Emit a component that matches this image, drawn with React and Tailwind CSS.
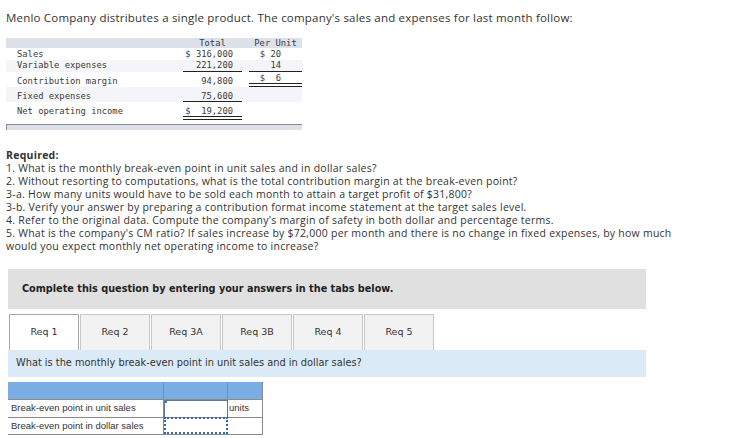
import React from "react";

const tabs = ["Req 1", "Req 2", "Req 3A", "Req 3B", "Req 4", "Req 5"];

function App() {
  return (
    <div className="w-[741px] h-[438px] overflow-hidden bg-white text-[#333]">
      <p className="pt-[11px] pl-[6px] font-['Open_Sans',sans-serif] text-[11.5px] leading-[14px] tracking-[0.2px] whitespace-nowrap">
        Menlo Company distributes a single product. The company's sales and expenses for last month follow:
      </p>

      {/* income statement */}
      <div className="ml-[6px] mt-[13px] w-[296px] font-['DejaVu_Sans_Mono',monospace] text-[8.8px] leading-[10px] whitespace-pre text-[#3a3a3a]">
        <div className="flex h-[10px] bg-[#dde1e9]">
          <div className="w-[177px]" />
          <div className="w-[59px] text-center">Total</div>
          <div className="w-[7px]" />
          <div className="w-[53px] text-center">Per Unit</div>
        </div>
        <div className="flex h-[12px] items-center">
          <div className="w-[177px] pl-[11px]">Sales</div>
          <div className="w-[59px] pr-[9px] text-right">$ 316,000</div>
          <div className="w-[7px]" />
          <div className="w-[53px] pr-[21px] text-right">$ 20</div>
        </div>
        <div className="flex h-[12px] bg-[#f4f5f8]">
          <div className="w-[177px] pl-[11px]">Variable expenses</div>
          <div className="w-[59px] pr-[9px] text-right border-b border-[#222]">221,200</div>
          <div className="w-[7px]" />
          <div className="w-[53px] pr-[21px] text-right border-b border-[#222]">14</div>
        </div>
        <div className="flex h-[15px]">
          <div className="w-[177px] pl-[11px] pt-[4px]">Contribution margin</div>
          <div className="w-[59px] pr-[9px] pt-[4px] text-right">94,800</div>
          <div className="w-[7px]" />
          <div className="w-[53px] pr-[21px] pt-[1px] text-right border-b-[4px] border-double border-[#222]">$  6</div>
        </div>
        <div className="flex h-[15px] bg-[#f4f5f8]">
          <div className="w-[177px] pl-[11px] pt-[4px]">Fixed expenses</div>
          <div className="w-[59px] pr-[9px] pt-[4px] text-right border-b border-[#222]">75,600</div>
          <div className="w-[7px]" />
          <div className="w-[53px]" />
        </div>
        <div className="flex h-[18px]">
          <div className="w-[177px] pl-[11px] pt-[4px]">Net operating income</div>
          <div className="w-[59px] pr-[9px] pt-[4px] text-right border-b-[4px] border-double border-[#222]">$  19,200</div>
          <div className="w-[7px]" />
          <div className="w-[53px]" />
        </div>
      </div>
      <div className="ml-[6px] mt-[4px] h-[6px] w-[296px] border-l border-t border-[#8a8d94] bg-[#dde0e8]" />

      {/* requirements */}
      <div className="mt-[19px] w-[700px] pl-[6px] font-['Open_Sans',sans-serif] text-[10.5px] leading-[13px] tracking-[0.25px]">
        <p className="font-bold">Required:</p>
        <p>1. What is the monthly break-even point in unit sales and in dollar sales?</p>
        <p>2. Without resorting to computations, what is the total contribution margin at the break-even point?</p>
        <p>3-a. How many units would have to be sold each month to attain a target profit of $31,800?</p>
        <p>3-b. Verify your answer by preparing a contribution format income statement at the target sales level.</p>
        <p>4. Refer to the original data. Compute the company's margin of safety in both dollar and percentage terms.</p>
        <p>
          5. What is the company's CM ratio? If sales increase by $72,000 per month and there is no change in fixed expenses, by how much
          would you expect monthly net operating income to increase?
        </p>
      </div>

      {/* instructions */}
      <div className="ml-[8px] mt-[16px] flex h-[40px] w-[638px] items-center bg-[#e0e0e0] pl-[14px] font-['DejaVu_Sans',sans-serif] text-[9.7px] font-bold text-[#222]">
        Complete this question by entering your answers in the tabs below.
      </div>

      <div className="ml-[9px] mt-[5px] flex gap-[1px] font-['DejaVu_Sans',sans-serif] text-[9.5px]">
        {tabs.map((t, i) => (
          <div
            key={t}
            className={
              i === 0
                ? "flex h-[36px] w-[70px] items-center justify-center border border-b-0 border-[#a8a8a8] bg-white"
                : "flex h-[36px] w-[70px] items-center justify-center border border-b-0 border-[#c8c8c8] bg-[#f2f2f2]"
            }
          >
            {t}
          </div>
        ))}
      </div>
      <div className="ml-[8px] flex h-[27px] w-[638px] items-center bg-[#dbeaf7] pl-[8px] font-['DejaVu_Sans',sans-serif] text-[9.8px]">
        What is the monthly break-even point in unit sales and in dollar sales?
      </div>

      {/* answer table */}
      <div className="ml-[8px] mt-[5px] w-[255px] font-['Liberation_Sans',sans-serif] text-[9.5px]">
        <div className="flex h-[17px] bg-[#7aaee2]">
          <div className="w-[156px] border-r border-[#8a8a8a]" />
          <div className="w-[64px] border-r border-[#8a8a8a]" />
          <div className="w-[35px] border-r border-[#8a8a8a]" />
        </div>
        <div className="flex h-[18px] border-t border-[#8a8a8a]">
          <div className="flex w-[156px] items-center border-r border-[#8a8a8a] pl-[3px]">Break-even point in unit sales</div>
          <div className="relative w-[64px] border-r border-l border-t border-[#5f7896]">
            <div className="absolute left-0 top-0 h-[2px] w-[2px] bg-[#3a78c8]" />
          </div>
          <div className="flex w-[35px] items-center border-r border-[#8a8a8a] pl-[1px]">units</div>
        </div>
        <div className="flex h-[18px] border-t border-b border-[#8a8a8a]">
          <div className="flex w-[156px] items-center border-r border-[#8a8a8a] pl-[3px]">Break-even point in dollar sales</div>
          <div className="w-[64px] border-2 border-dotted border-[#3568a8] -mt-[1px]" />
          <div className="w-[35px] border-r border-[#8a8a8a]" />
        </div>
      </div>
    </div>
  );
}

export default App;
